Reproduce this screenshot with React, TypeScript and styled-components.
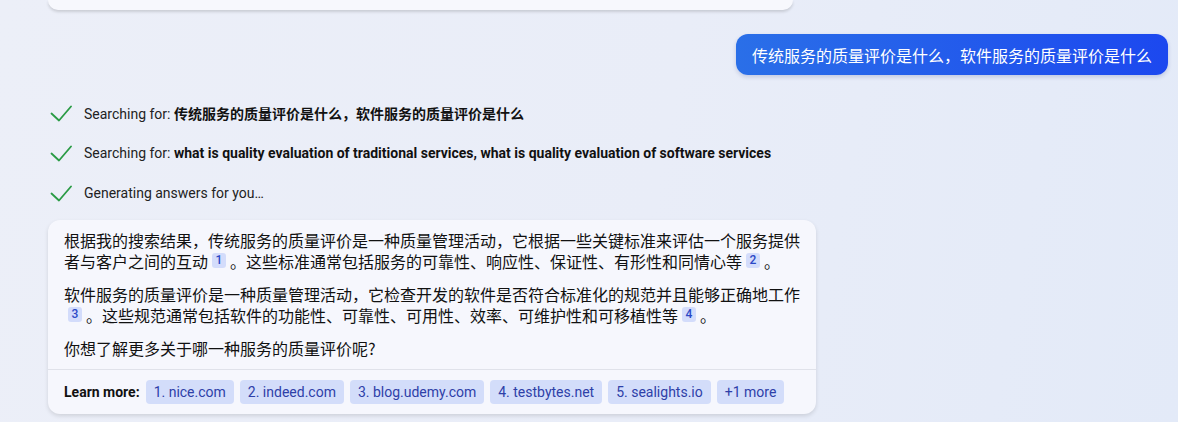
import React from 'react';
import styled, { createGlobalStyle } from 'styled-components';

const GlobalStyle = createGlobalStyle`
  html, body {
    margin: 0;
    padding: 0;
  }
  body {
    width: 1178px;
    height: 422px;
    overflow: hidden;
    background: linear-gradient(100deg, #eceff8 0%, #e9edf8 55%, #e3eaf8 100%);
    font-family: Roboto, "Noto Sans CJK SC", sans-serif;
    color: #111;
  }
`;

const searches = [
  { label: 'Searching for: ', query: '传统服务的质量评价是什么，软件服务的质量评价是什么' },
  {
    label: 'Searching for: ',
    query:
      'what is quality evaluation of traditional services, what is quality evaluation of software services',
  },
  { label: 'Generating answers for you…', query: '' },
];

const sources = [
  '1. nice.com',
  '2. indeed.com',
  '3. blog.udemy.com',
  '4. testbytes.net',
  '5. sealights.io',
  '+1 more',
];

const CheckIcon = () => (
  <svg width="24" height="18" viewBox="0 0 24 18" fill="none">
    <path
      d="M3.5 9.5 L11 16.5 L23 2.5"
      stroke="#2a9b45"
      strokeWidth="1.8"
      strokeLinecap="round"
      strokeLinejoin="round"
    />
  </svg>
);

const App = () => {
  return (
    <>
      <GlobalStyle />
      <Page>
        <PrevCard />
        <UserRow>
          <UserBubble>传统服务的质量评价是什么，软件服务的质量评价是什么</UserBubble>
        </UserRow>
        <Steps>
          {searches.map((s, i) => (
            <Step key={i}>
              <CheckIcon />
              <StepText>
                {s.label}
                {s.query && <b>{s.query}</b>}
              </StepText>
            </Step>
          ))}
        </Steps>
        <AnswerCard>
          <AnswerBody>
            <Para>
              根据我的搜索结果，传统服务的质量评价是一种质量管理活动，它根据一些关键标准来评估一个服务提供者与客户之间的互动
              <Cite>1</Cite>。这些标准通常包括服务的可靠性、响应性、保证性、有形性和同情心等
              <Cite>2</Cite>。
            </Para>
            <Para>
              软件服务的质量评价是一种质量管理活动，它检查开发的软件是否符合标准化的规范并且能够正确地工作
              <Cite>3</Cite>。这些规范通常包括软件的功能性、可靠性、可用性、效率、可维护性和可移植性等
              <Cite>4</Cite>。
            </Para>
            <Para>你想了解更多关于哪一种服务的质量评价呢?</Para>
          </AnswerBody>
          <LearnMore>
            <LearnLabel>Learn more:</LearnLabel>
            {sources.map((s) => (
              <Chip key={s}>{s}</Chip>
            ))}
          </LearnMore>
        </AnswerCard>
      </Page>
    </>
  );
};

export default App;

const Page = styled.div`
  display: flex;
  flex-direction: column;
  padding: 0 10px 0 48px;
`;

const PrevCard = styled.div`
  width: 745px;
  height: 10px;
  background: #f7f8fd;
  border-radius: 0 0 12px 12px;
  box-shadow: 0 2px 3px rgba(0, 0, 0, 0.14);
`;

const UserRow = styled.div`
  display: flex;
  justify-content: flex-end;
  margin-top: 24px;
`;

const UserBubble = styled.div`
  padding: 0 16px;
  height: 41px;
  display: flex;
  align-items: center;
  border-radius: 12px;
  background: linear-gradient(90deg, #2a6fe8 0%, #2258ec 60%, #1c48ef 100%);
  color: #fff;
  font-family: "Noto Sans CJK SC", sans-serif;
  font-size: 16px;
  box-shadow: 0 2px 4px rgba(20, 40, 120, 0.18);
`;

const Steps = styled.div`
  display: flex;
  flex-direction: column;
  margin-top: 18px;
`;

const Step = styled.div`
  display: flex;
  align-items: center;
  height: 40px;
  gap: 12px;
  svg {
    flex: none;
  }
`;

const StepText = styled.span`
  font-family: Roboto, "Noto Sans CJK SC", sans-serif;
  font-size: 14px;
  color: #222;
  b {
    font-weight: 700;
    color: #111;
  }
`;

const AnswerCard = styled.div`
  width: 768px;
  margin-top: 7px;
  background: #f6f7fd;
  border-radius: 12px;
  box-shadow: 0 2px 4px rgba(0, 0, 0, 0.12);
  overflow: hidden;
`;

const AnswerBody = styled.div`
  padding: 10px 16px 10px;
  font-family: "Noto Sans CJK SC", sans-serif;
  font-size: 16px;
  line-height: 21px;
  color: #111;
`;

const Para = styled.p`
  margin: 0 0 12px;
  &:last-child {
    margin-bottom: 0;
  }
`;

const Cite = styled.span`
  display: inline-block;
  min-width: 14px;
  height: 15px;
  margin: 0 4px;
  padding: 0 2px;
  box-sizing: border-box;
  border-radius: 3px;
  background: #d3dcfb;
  color: #2b48c6;
  font-family: Roboto, sans-serif;
  font-size: 12px;
  font-weight: 500;
  line-height: 15px;
  text-align: center;
  vertical-align: 4px;
`;

const LearnMore = styled.div`
  display: flex;
  align-items: center;
  gap: 6px;
  height: 44px;
  padding: 0 16px;
  border-top: 1px solid #e0e2ea;
`;

const LearnLabel = styled.span`
  font-family: Roboto, sans-serif;
  font-size: 14px;
  font-weight: 700;
  color: #111;
`;

const Chip = styled.span`
  display: inline-flex;
  align-items: center;
  height: 24px;
  padding: 0 8px;
  border-radius: 4px;
  background: #d3ddfa;
  color: #2e40a8;
  font-family: Roboto, sans-serif;
  font-size: 14px;
`;
